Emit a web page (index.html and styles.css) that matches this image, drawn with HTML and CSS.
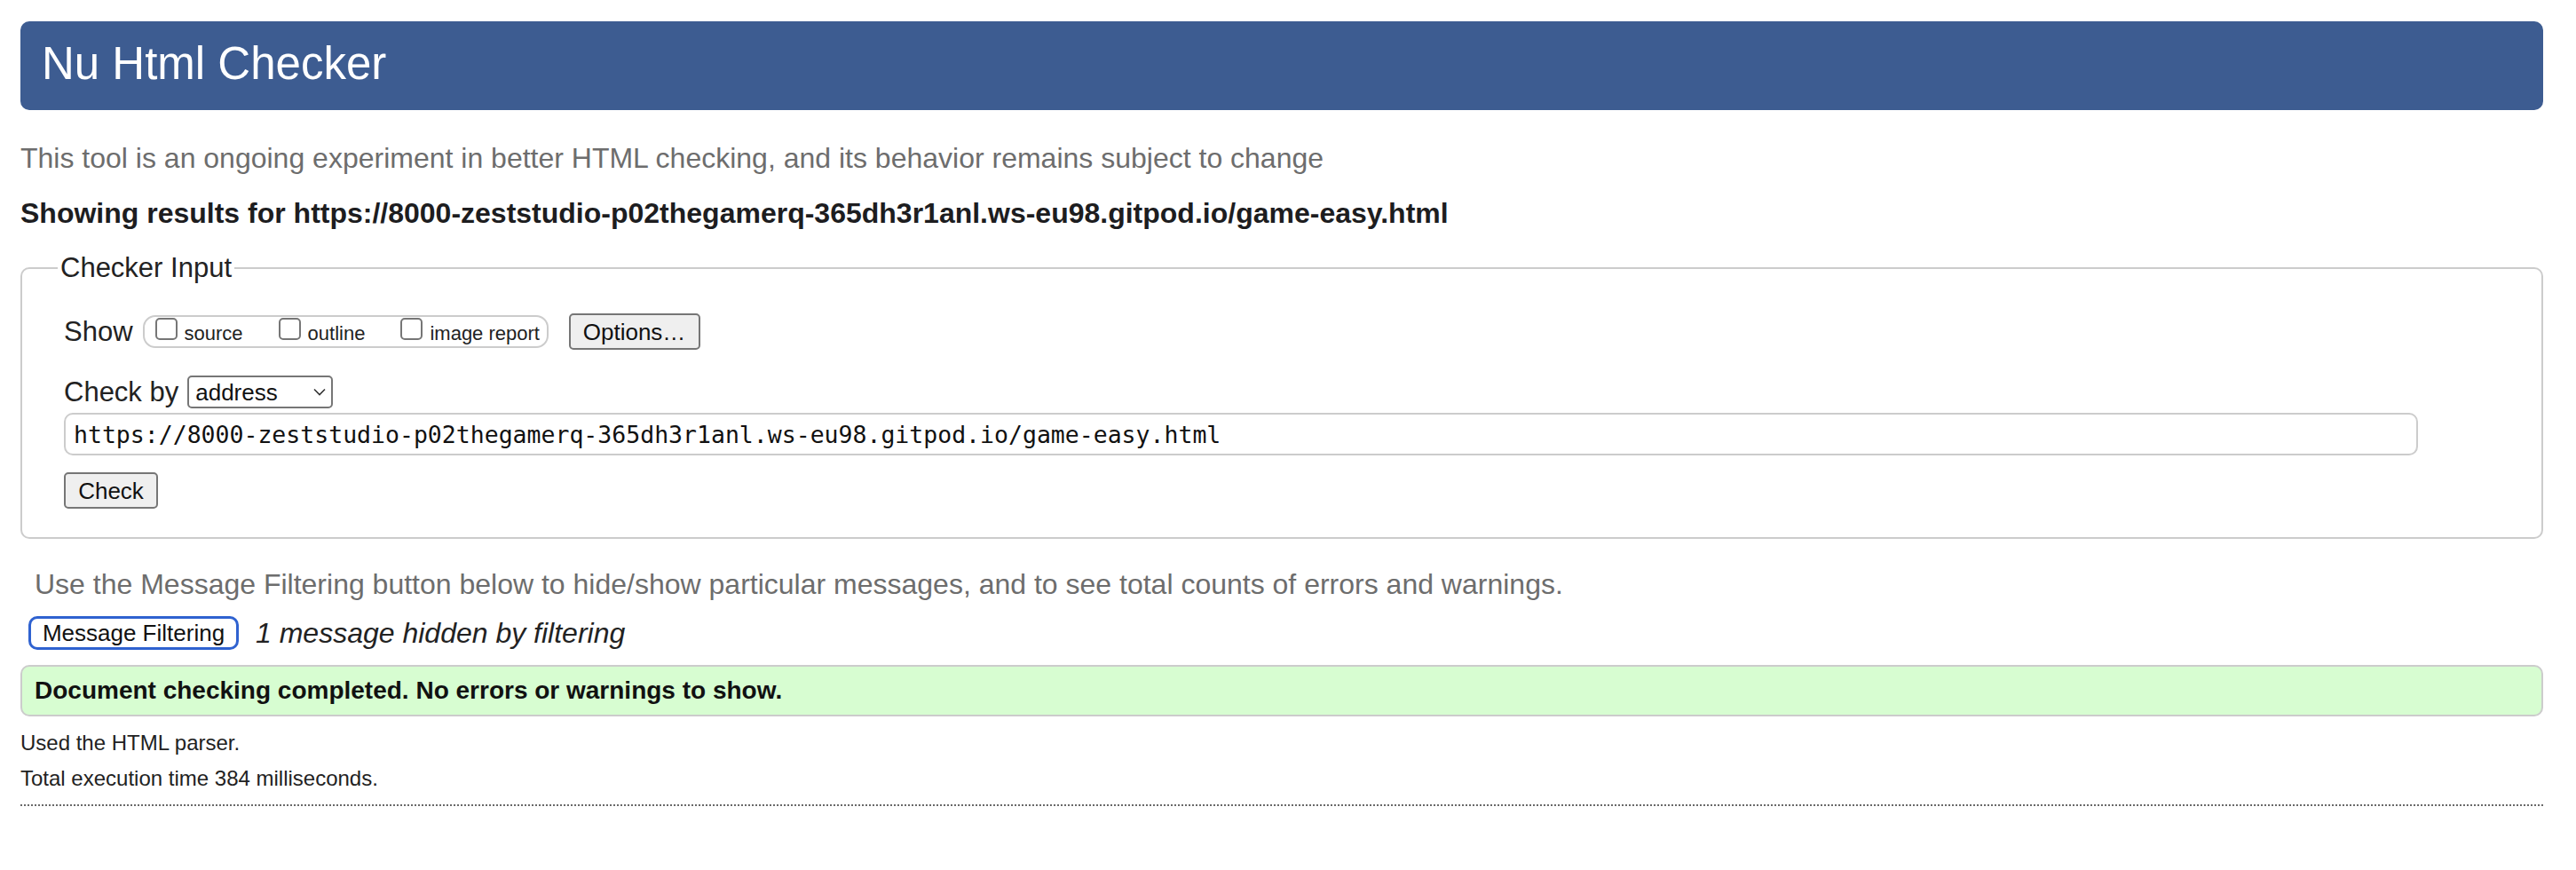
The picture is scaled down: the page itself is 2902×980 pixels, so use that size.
FILE: index.html
```html
<!DOCTYPE html>
<html lang="en">
<head>
<meta charset="utf-8">
<title>Showing results for https://8000-zeststudio-p02thegamerq-365dh3r1anl.ws-eu98.gitpod.io/game-easy.html - Nu Html Checker</title>
<link rel="stylesheet" href="styles.css">
</head>
<body>
<h1 class="title">Nu Html Checker</h1>
<p class="intro">This tool is an ongoing experiment in better HTML checking, and its behavior remains subject to change</p>
<h2 class="results-for">Showing results for https://8000-zeststudio-p02thegamerq-365dh3r1anl.ws-eu98.gitpod.io/game-easy.html</h2>
<form class="checker-form">
  <fieldset class="checker-input">
    <legend class="checker-legend">Checker Input</legend>
    <div class="row row-show">
      <span class="label">Show</span>
      <span class="show-group">
        <label class="opt"><input type="checkbox" class="cb"><span class="opt-text">source</span></label>
        <label class="opt"><input type="checkbox" class="cb"><span class="opt-text">outline</span></label>
        <label class="opt"><input type="checkbox" class="cb"><span class="opt-text">image report</span></label>
      </span>
      <button type="button" class="btn btn-options">Options…</button>
    </div>
    <div class="row row-checkby">
      <span class="label">Check by</span>
      <span class="select-wrap">
        <select class="select"><option>address</option></select>
        <svg class="chevron" width="14" height="9" viewBox="0 0 14 9"><path d="M1 1.5 L7 7.5 L13 1.5" fill="none" stroke="#333" stroke-width="1.6"/></svg>
      </span>
    </div>
    <div class="row row-url">
      <input type="text" class="url" value="https://8000-zeststudio-p02thegamerq-365dh3r1anl.ws-eu98.gitpod.io/game-easy.html">
    </div>
    <div class="row row-submit">
      <button type="button" class="btn btn-check">Check</button>
    </div>
  </fieldset>
</form>
<p class="filter-note">Use the Message Filtering button below to hide/show particular messages, and to see total counts of errors and warnings.</p>
<div class="filter-row">
  <button type="button" class="btn-filter">Message Filtering</button>
  <span class="hidden-count">1 message hidden by filtering</span>
</div>
<p class="success">Document checking completed. No errors or warnings to show.</p>
<p class="stats">Used the HTML parser.</p>
<p class="stats stats-time">Total execution time 384 milliseconds.</p>
<hr class="dotted">
</body>
</html>
```
FILE: styles.css
```css
* { box-sizing: border-box; }

html, body { background: #ffffff; }

body {
  margin: 24px 37px 0 23px;
  font-family: "Liberation Sans", Arial, Helvetica, sans-serif;
  color: #222222;
}

.title {
  margin: 0;
  height: 100px;
  padding: 19px 24px 0 24px;
  background: #3d5c91;
  color: #ffffff;
  border-radius: 10px;
  font-size: 51px;
  line-height: 57px;
  font-weight: normal;
}

.intro {
  margin: 36px 0 0 0;
  font-size: 32px;
  line-height: 36px;
  color: #6d6d6d;
}

.results-for {
  margin: 26px 0 0 0;
  font-size: 32px;
  line-height: 36px;
  font-weight: bold;
  color: #1d1d1f;
}

.checker-form { margin: 0; }

.checker-input {
  margin: 26px 0 0 0;
  padding: 33px 20px 32px 47px;
  border: 2px solid #cccccc;
  border-radius: 10px;
  min-width: 0;
}

.checker-legend {
  padding: 0 3px;
  margin-left: -7px;
  font-size: 31px;
  line-height: 36px;
  color: #222222;
}

.row {
  display: flex;
  align-items: center;
}

.label {
  font-size: 31px;
  line-height: 36px;
  color: #222222;
}

.row-show { height: 41px; }

.show-group {
  display: flex;
  align-items: center;
  margin-left: 11px;
  height: 37px;
  width: 457px;
  padding: 0 0 0 12px;
  border: 2px solid #cccccc;
  border-radius: 14px;
}

.opt {
  display: flex;
  align-items: center;
  margin-right: 40px;
}

.opt:last-child { margin-right: 0; }

.cb {
  -webkit-appearance: none;
  appearance: none;
  width: 25px;
  height: 25px;
  margin: 0 8px 7px 0;
  border: 2px solid #767676;
  border-radius: 5px;
  background: #ffffff;
}

.opt-text {
  font-size: 22px;
  line-height: 26px;
  color: #222222;
  padding-top: 4px;
}

.btn {
  font-family: "Liberation Sans", Arial, Helvetica, sans-serif;
  font-size: 26px;
  line-height: 30px;
  color: #111111;
  background: #efefef;
  border: 2px solid #767676;
  border-radius: 5px;
  padding: 0;
}

.btn-options {
  margin-left: 23px;
  width: 148px;
  height: 41px;
}

.row-checkby {
  margin-top: 29px;
  height: 37px;
}

.select-wrap {
  position: relative;
  display: inline-block;
  margin-left: 10px;
  width: 164px;
  height: 37px;
}

.select {
  -webkit-appearance: none;
  appearance: none;
  width: 164px;
  height: 37px;
  padding: 0 0 0 7px;
  border: 2px solid #767676;
  border-radius: 5px;
  background: #ffffff;
  font-family: "Liberation Sans", Arial, Helvetica, sans-serif;
  font-size: 26px;
  color: #111111;
}

.chevron {
  position: absolute;
  right: 8px;
  top: 14px;
}

.row-url { margin-top: 5px; }

.url {
  display: block;
  width: 2652px;
  height: 48px;
  padding: 0 9px;
  border: 2px solid #cccccc;
  border-radius: 10px;
  font-family: "DejaVu Sans Mono", "Liberation Mono", monospace;
  font-size: 26.5px;
  color: #111111;
  background: #ffffff;
}

.row-submit { margin-top: 19px; }

.btn-check {
  width: 106px;
  height: 41px;
}

.filter-note {
  margin: 33px 0 0 0;
  padding-left: 16px;
  font-size: 32px;
  line-height: 36px;
  color: #6d6d6d;
}

.filter-row {
  display: flex;
  align-items: center;
  margin-top: 18px;
  height: 38px;
}

.btn-filter {
  margin-left: 9px;
  width: 237px;
  height: 38px;
  padding: 0;
  background: #ffffff;
  border: 3px solid #2f62d0;
  border-radius: 10px;
  font-family: "Liberation Sans", Arial, Helvetica, sans-serif;
  font-size: 26px;
  color: #111111;
}

.hidden-count {
  margin-left: 19px;
  font-size: 32px;
  font-style: italic;
  color: #222222;
}

.success {
  margin: 17px 0 0 0;
  height: 58px;
  padding: 0 14px;
  display: flex;
  align-items: center;
  background: #d7fdd1;
  border: 2px solid #cccccc;
  border-radius: 10px;
  font-size: 28px;
  font-weight: bold;
  color: #111111;
}

.stats {
  margin: 16px 0 0 0;
  font-size: 24px;
  line-height: 28px;
  color: #222222;
}

.stats-time { margin-top: 12px; }

.dotted {
  margin: 15px 0 0 0;
  height: 0;
  border: 0;
  border-top: 2px dotted #6a6a6a;
}
```
